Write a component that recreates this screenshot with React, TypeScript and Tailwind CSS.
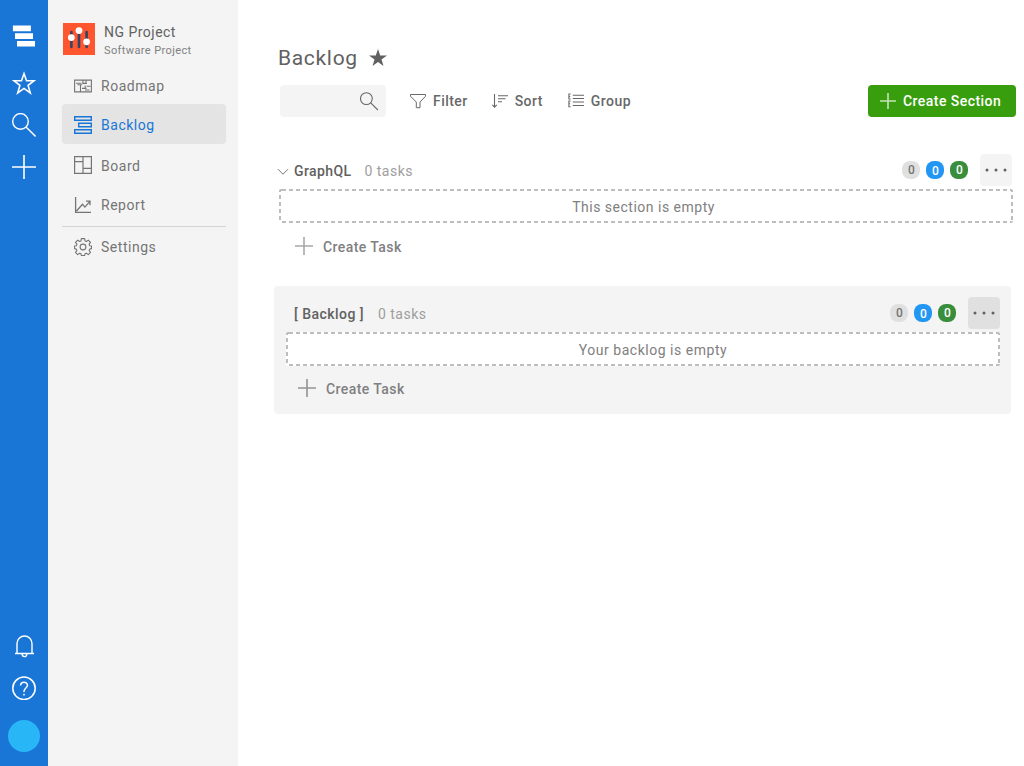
import type { ReactNode } from "react";

type IconProps = {
  w: number;
  h: number;
  className?: string;
  sw?: number;
  children: ReactNode;
};

function Icon({ w, h, className = "", sw = 1, children }: IconProps) {
  return (
    <svg
      width={w}
      height={h}
      viewBox={`0 0 ${w} ${h}`}
      fill="none"
      stroke="currentColor"
      strokeWidth={sw}
      className={`block shrink-0 ${className}`}
    >
      {children}
    </svg>
  );
}

function Rail() {
  return (
    <nav className="flex w-12 shrink-0 flex-col items-center bg-[#1976d6] text-white">
      <Icon w={24} h={22} className="mt-[25px]">
        <path
          d="M.9.5h18v5.7h-18zM3 8.2h18v5.7H3zM5 15.9h18v5.7H5z"
          fill="currentColor"
          stroke="none"
        />
      </Icon>
      <Icon w={24} h={24} sw={1.6} className="mt-6">
        <path d="M12 2.6l2.5 7.1h7.6l-6 4.7 2.2 7.5-6.3-4.5-6.3 4.5 2.2-7.5-6-4.7h7.6z" />
      </Icon>
      <Icon w={24} h={24} sw={1.4} className="mt-[18px]">
        <circle cx="8.5" cy="8.4" r="7.8" />
        <path d="M14 14l9.6 9.4" />
      </Icon>
      <Icon w={24} h={24} sw={1.6} className="mt-[18px]">
        <path d="M12 0v24M0 12h24" />
      </Icon>
      <div className="mt-auto flex flex-col items-center pb-[14px]">
        <Icon w={20} h={23} sw={1.4} className="ml-px">
          <path d="M2 18.5V8.5a7.5 7.5 0 0 1 15 0v10M0 18.5h19M7.1 18.8c0 3.8 4.8 3.8 4.8 0" />
        </Icon>
        <Icon w={24} h={24} sw={1.5} className="mt-[18px]">
          <circle cx="12" cy="12.3" r="11.2" />
          <path d="M8.6 9.5c0-4.2 6.9-4.2 6.9-.2 0 2.7-3.5 2.7-3.5 6v.6M12 17.7v1.8" />
        </Icon>
        <div className="mt-5 size-8 rounded-full bg-[#29b6f6]" />
      </div>
    </nav>
  );
}

function NavItem({ icon, label, active }: { icon: ReactNode; label: string; active?: boolean }) {
  return (
    <a
      className={`flex h-10 items-center gap-[9px] rounded pl-3 text-sm tracking-[0.52px] ${
        active ? "bg-[#e4e4e4] text-[#1976d6]" : "text-[#757575]"
      }`}
    >
      {icon}
      <span className={active ? "pt-[2px]" : ""}>{label}</span>
    </a>
  );
}

function Sidebar() {
  return (
    <aside className="w-[190px] shrink-0 bg-[#f4f4f4] pl-[14px] pr-3 pt-[23px]">
      <div className="ml-px flex h-8 gap-[9px]">
        <svg width="32" height="32" viewBox="0 0 32 32" className="shrink-0">
          <rect width="32" height="32" fill="#ff5630" />
          <path
            d="M8.4 9v15M16 9v15M23.6 9v15"
            stroke="#344563"
            strokeWidth="2.6"
            strokeLinecap="round"
          />
          <g fill="white">
            <circle cx="8.3" cy="14.6" r="3.4" />
            <circle cx="16" cy="7.6" r="3.4" />
            <circle cx="23.6" cy="18.8" r="3.4" />
          </g>
        </svg>
        <div className="text-[#616161]">
          <div className="text-sm leading-[18px] tracking-[0.48px]">NG Project</div>
          <div className="mt-px text-[11px] leading-[18px] tracking-[0.39px] text-[#808080]">Software Project</div>
        </div>
      </div>
      <div className="mt-[11px] flex flex-col">
        <NavItem
          label="Roadmap"
          icon={
            <Icon w={18} h={14} sw={1.1}>
              <path d="M.6 1.1h16.8v11.8H.6zM2 4.2h5.5M3.5 5.8h4.6M6.5 5.8v7M8.9 1.5v3.7M12 1.5v3.2M8.9 4.4h4M11.2 6.6v3M12.6 7.3h4M8 9.4h4.5M11 11h4.5" />
            </Icon>
          }
        />
        <div className="-mt-[2px] pb-[2px]">
          <NavItem
            active
            label="Backlog"
            icon={
              <Icon w={18} h={18} sw={1.4} className="mt-px">
                <path d="M.7.7h16.6v3.6H.7zM4.7 7.2h12.6v3.6H4.7zM.7 13.7h16.6v3.6H.7z" />
              </Icon>
            }
          />
        </div>
        <NavItem
          label="Board"
          icon={
            <Icon w={18} h={18} sw={1.2} className="-mt-[2px]">
              <path d="M.6.6h16.8v16.8H.6zM9 .6v16.8M.6 5.6H9M9 12.3h8.4" />
            </Icon>
          }
        />
        <div className="-mt-px pb-px">
          <NavItem
            label="Report"
            icon={
              <Icon w={18} h={16} sw={1.3}>
                <path d="M1.6 0v15.4H17M2.5 14l6-6.7 2.4 2.8 5-5.8M12 4.2h4v4" />
              </Icon>
            }
          />
        </div>
        <div className="h-px bg-[#d3d3d3]" />
        <NavItem
          label="Settings"
          icon={
            <Icon w={18} h={18} sw={1.1}>
              <circle cx="9" cy="9" r="2.9" />
              <path
                strokeLinejoin="round"
                d="M7.3.6h3.4l.3 2.3 1.4.6 1.9-1.4 2.2 2.3-1.4 1.8.6 1.5 1.8.3v2.6l-1.8.5-.6 1.4 1.4 1.9-2.2 2.2-1.9-1.4-1.4.6-.3 1.7H7.3L7 15.8l-1.4-.6-1.9 1.4-2.2-2.2 1.4-1.9-.6-1.4-1.8-.5V8l1.8-.3.6-1.5-1.4-1.8 2.2-2.3 1.9 1.4L7 2.9z"
              />
            </Icon>
          }
        />
      </div>
    </aside>
  );
}

function Count({ className }: { className: string }) {
  return (
    <span
      className={`flex size-[18px] items-center justify-center rounded-[8px] pl-px text-xs font-medium leading-none ${className}`}
    >
      0
    </span>
  );
}

function SectionHeader({ children, menu }: { children: ReactNode; menu: string }) {
  return (
    <div className="flex h-8 items-center">
      {children}
      <div className="ml-auto flex gap-1.5">
        <Count className="bg-[#e0e0e0] text-[#757575]" />
        <Count className="bg-[#2196f3] pt-[2px] text-white" />
        <Count className="bg-[#388e3c] text-white" />
      </div>
      <button className={`ml-3 block size-8 rounded text-[#616161] ${menu}`}>
        <svg width="32" height="32" viewBox="0 0 32 32" fill="currentColor">
          <circle cx="7" cy="16" r="1.5" />
          <circle cx="16" cy="16" r="1.5" />
          <circle cx="25" cy="16" r="1.5" />
        </svg>
      </button>
    </div>
  );
}

function EmptyBox({ text, className }: { text: string; className: string }) {
  return (
    <div
      className={`mt-[3px] flex h-[34px] items-center justify-center rounded-[2px] bg-white bg-[image:repeating-linear-gradient(90deg,#bdbdbd_0_4px,transparent_4px_7px),repeating-linear-gradient(90deg,#bdbdbd_0_4px,transparent_4px_7px),repeating-linear-gradient(180deg,#bdbdbd_0_4px,transparent_4px_7px),repeating-linear-gradient(180deg,#bdbdbd_0_4px,transparent_4px_7px),linear-gradient(#bdbdbd,#bdbdbd)] bg-[position:3px_0,3px_100%,0_6px,100%_6px,1px_0] bg-[size:7px_2px,7px_2px,2px_7px,2px_7px,4px_2px] [background-repeat:repeat-x,repeat-x,repeat-y,repeat-y,no-repeat] pt-[2px] text-sm text-[#808080] ${className}`}
    >
      {text}
    </div>
  );
}

function CreateTask({ className, iconClass }: { className: string; iconClass: string }) {
  return (
    <button
      className={`flex h-5 items-center gap-[10px] text-sm font-medium tracking-[0.42px] text-[#808080] ${className}`}
    >
      <Icon w={18} h={18} sw={1.6} className={`-mt-[2px] ${iconClass}`}>
        <path d="M9 0v18M0 9h18" />
      </Icon>
      Create Task
    </button>
  );
}

function Tool({ icon, label }: { icon: ReactNode; label: string }) {
  return (
    <button className="flex items-center gap-[7px]">
      {icon}
      {label}
    </button>
  );
}

export default function App() {
  return (
    <div className="flex h-[766px] w-[1024px] overflow-hidden bg-white font-[Roboto,sans-serif]">
      <Rail />
      <Sidebar />
      <main className="flex-1 pt-11">
        <div className="ml-10 flex h-7 items-center gap-[11px] text-[#616161]">
          <h1 className="text-[21px] leading-7 tracking-[0.68px]">Backlog</h1>
          <svg width="18" height="18" viewBox="0 0 18 18" fill="currentColor" className="-mt-px">
            <path d="M9 0l2.2 6.4H18l-5.5 4.1 2 6.6L9 13.1l-5.5 4 2-6.6L0 6.4h6.8z" />
          </svg>
        </div>
        <div className="ml-[42px] mr-2 mt-[13px] flex h-8 items-center text-sm font-medium tracking-[0.45px] text-[#686868]">
          <div className="flex h-8 w-[106px] items-center justify-end rounded bg-[#f4f4f4] pr-[7px]">
            <Icon w={19} h={19} sw={1.1}>
              <circle cx="6.4" cy="6.6" r="5.9" />
              <path d="M10.7 10.8l7.2 7.2" />
            </Icon>
          </div>
          <div className="ml-6 flex gap-6">
            <Tool
              label="Filter"
              icon={
                <Icon w={16} h={16}>
                  <path d="M.5 1.5h15v1.7L10 9.1v5.6H6.3V9.1L.5 3.2z" />
                </Icon>
              }
            />
            <Tool
              label="Sort"
              icon={
                <Icon w={16} h={16} sw={1.1}>
                  <path d="M2.5 1v13M.3 11.8l2.2 2.3 2.3-2.3M6 2.7h10M6 5.7h7.5M6 8.7h4" />
                </Icon>
              }
            />
            <div className="ml-px">
              <Tool
                label="Group"
                icon={
                  <Icon w={16} h={16} sw={1.1}>
                    <path d="M2.6 1H.9v5h1.7M.9 3.5h1.3M2.6 8H.9v5.8h1.7M.9 10.8h1.3M4.8 2.3H16M4.8 5.5H16M4.8 9H16M4.8 12.5H16" />
                  </Icon>
                }
              />
            </div>
          </div>
          <button className="ml-auto flex h-8 w-[148px] items-center gap-[7px] rounded bg-[#389e0d] pl-3 text-white">
            <Icon w={16} h={16} sw={1.6} className="opacity-70">
              <path d="M8 0v16M0 8h16" />
            </Icon>
            Create Section
          </button>
        </div>

        <section className="ml-[41px] mr-[11px] mt-[37px]">
          <div className="-ml-[2px] mr-px">
            <SectionHeader menu="bg-[#f4f4f4]">
              <Icon w={12} h={8} className="mr-[5px] mt-[3px] text-[#757575]">
                <path d="M1 1.2l5 5 5-5" />
              </Icon>
              <h2 className="mt-px text-sm font-medium tracking-[0.4px] text-[#616161]">GraphQL</h2>
              <span className="ml-[13px] mt-px text-sm tracking-[0.5px] text-[#9e9e9e]">0 tasks</span>
            </SectionHeader>
          </div>
          <EmptyBox text="This section is empty" className="pr-[5px] tracking-[0.5px]" />
          <CreateTask className="ml-4 mt-[14px]" iconClass="text-[#a8a8a8]" />
        </section>

        <section className="ml-9 mr-[13px] mt-[29px] h-32 rounded bg-[#f4f4f4] pl-3 pr-[11px] pt-[11px]">
          <SectionHeader menu="bg-[#e0e0e0]">
            <h2 className="ml-2 mt-[2px] text-sm font-medium tracking-[0.45px] text-[#616161]">[ Backlog ]</h2>
            <span className="ml-[14px] mt-[2px] text-sm tracking-[0.5px] text-[#9e9e9e]">0 tasks</span>
          </SectionHeader>
          <EmptyBox text="Your backlog is empty" className="pl-5 tracking-[0.52px]" />
          <CreateTask className="ml-3 mt-[13px]" iconClass="text-[#939393]" />
        </section>
      </main>
    </div>
  );
}
